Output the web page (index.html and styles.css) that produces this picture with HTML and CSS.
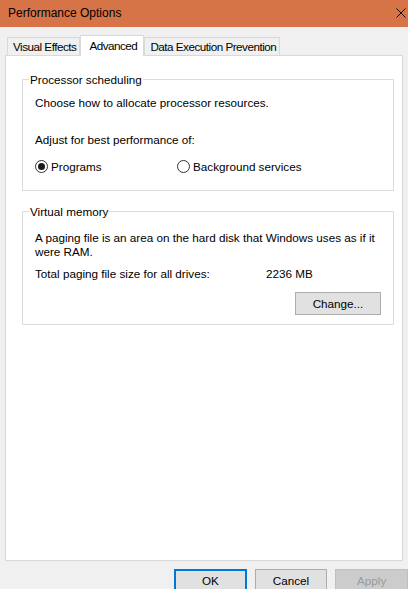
FILE: index.html
```html
<!DOCTYPE html>
<html lang="en">
<head>
    <meta charset="UTF-8">
    <meta name="viewport" content="width=device-width, initial-scale=1.0">
    <title>Performance Options</title>
    <link rel="stylesheet" href="styles.css">
</head>
<body>
    <div class="titlebar">
        <span class="title">Performance Options</span>
        <svg class="close" width="10" height="10" viewBox="0 0 10 10">
            <path d="M0.5 0.5 L9.5 9.5 M9.5 0.5 L0.5 9.5" stroke="#000" stroke-width="1" fill="none"/>
        </svg>
    </div>

    <div class="tabs">
        <div class="tab">Visual Effects</div>
        <div class="tab selected">Advanced</div>
        <div class="tab">Data Execution Prevention</div>
    </div>

    <div class="panel">
        <fieldset class="group">
            <legend>Processor scheduling</legend>
            <p class="first">Choose how to allocate processor resources.</p>
            <p class="adjust">Adjust for best performance of:</p>
            <div class="radios">
                <label class="option option-programs"><span class="radio checked"></span>Programs</label>
                <label class="option"><span class="radio"></span>Background services</label>
            </div>
        </fieldset>

        <fieldset class="group vm">
            <legend>Virtual memory</legend>
            <p class="desc">A paging file is an area on the hard disk that Windows uses as if it<br>were RAM.</p>
            <div class="total">
                <span class="total-label">Total paging file size for all drives:</span>
                <span>2236 MB</span>
            </div>
            <div class="change-row">
                <button class="btn change">Change...</button>
            </div>
        </fieldset>
    </div>

    <div class="footer">
        <button class="btn default">OK</button>
        <button class="btn">Cancel</button>
        <button class="btn" disabled>Apply</button>
    </div>
</body>
</html>
```

FILE: styles.css
```css
body {
    margin: 0;
    width: 408px;
    height: 589px;
    overflow: hidden;
    background-color: #f0f0f0;
    font-family: "Liberation Sans", Arial, sans-serif;
    font-size: 11.7px;
    color: #000;
}
.titlebar {
    height: 27px;
    background-color: #d67447;
    display: flex;
    align-items: center;
    justify-content: space-between;
    padding: 0 2px 0 8px;
    font-size: 12px;
}
.title {
    line-height: 15px;
}
.close {
    display: block;
    margin-bottom: 1px;
}
.tabs {
    height: 28px;
    display: flex;
    align-items: flex-end;
    padding-left: 7px;
}
.tab {
    height: 17px;
    line-height: 17px;
    padding: 0 3px 0 5px;
    letter-spacing: -0.5px;
    border: 1px solid #d9d9d9;
    border-bottom: none;
    background-color: #f0f0f0;
}
.tab.selected {
    height: 20px;
    line-height: 19px;
    padding: 0 6px 0 8px;
    margin-bottom: -1px;
    background-color: #fff;
    position: relative;
    z-index: 1;
}
.panel {
    margin-left: 5px;
    width: 398px;
    height: 506px;
    border: 1px solid #d9d9d9;
    background-color: #fff;
    padding: 16px 8px 0 16px;
    box-sizing: border-box;
}
.group {
    margin: 0;
    padding: 0 12px 16px 12px;
    border: 1px solid #dcdcdc;
    min-width: 0;
}
.group legend {
    line-height: 15px;
    padding: 0 1px;
    margin-left: -6px;
}
.group p {
    margin: 0;
    line-height: 15px;
    white-space: nowrap;
}
.group p.first {
    margin-top: 8px;
}
.group p.adjust {
    margin-top: 22px;
}
.radios {
    margin-top: 12px;
    display: flex;
    line-height: 15px;
}
.option {
    display: flex;
    align-items: center;
}
.option-programs {
    width: 142px;
}
.radio {
    width: 11px;
    height: 11px;
    border: 1px solid #333;
    border-radius: 50%;
    margin-right: 3px;
    display: flex;
    align-items: center;
    justify-content: center;
}
.radio.checked::after {
    content: "";
    width: 7px;
    height: 7px;
    border-radius: 50%;
    background-color: #1a1a1a;
}
.vm {
    margin-top: 13px;
    padding-bottom: 9px;
}
.group p.desc {
    margin-top: 12px;
    line-height: 14px;
}
.total {
    margin-top: 8px;
    line-height: 14px;
    display: flex;
}
.total-label {
    width: 231px;
}
.change-row {
    margin-top: 11px;
    display: flex;
    justify-content: flex-end;
}
.btn {
    font-family: "Liberation Sans", Arial, sans-serif;
    font-size: 11.7px;
    color: #000;
    height: 23px;
    width: 73px;
    padding: 0;
    background-color: #e1e1e1;
    border: 1px solid #adadad;
    border-radius: 0;
}
.btn.change {
    width: 86px;
}
.btn.default {
    border: 2px solid #0078d7;
}
.btn:disabled {
    background-color: #cccccc;
    border-color: #bfbfbf;
    color: #9a9a9a;
}
.footer {
    margin-top: 8px;
    display: flex;
    gap: 8px;
    padding-left: 174px;
}
```
